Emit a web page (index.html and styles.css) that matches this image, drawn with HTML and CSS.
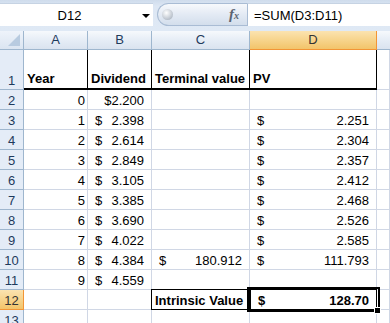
FILE: index.html
```html
<!DOCTYPE html>
<html>
    <head>
        <meta charset="utf-8" />
        <title>Intrinsic Value</title>
        <link rel="stylesheet" href="styles.css">
    </head>
    <body>
        <div class="formula-bar">
            <div class="name-box">
                <span class="name">D12</span>
                <span class="arrow"></span>
            </div>
            <div class="fx-pill">
                <span class="grip"></span>
                <span class="fx"><i>f</i><sub>x</sub></span>
            </div>
            <div class="formula">=SUM(D3:D11)</div>
        </div>

        <div class="sheet">
            <div class="corner"><span class="tri"></span></div>
            <div class="colhead">A</div>
            <div class="colhead">B</div>
            <div class="colhead">C</div>
            <div class="colhead active">D</div>
            <div class="colhead last"></div>

            <div class="rowhead">1</div>
            <div class="cell bold title">Year</div>
            <div class="cell bold title">Dividend</div>
            <div class="cell bold title">Terminal value</div>
            <div class="cell bold title">PV</div>
            <div class="cell"></div>

            <div class="rowhead">2</div>
            <div class="cell num">0</div>
            <div class="cell cur">$2.200</div>
            <div class="cell"></div>
            <div class="cell"></div>
            <div class="cell"></div>

            <div class="rowhead">3</div>
            <div class="cell num">1</div>
            <div class="cell acc"><span>$</span><span>2.398</span></div>
            <div class="cell"></div>
            <div class="cell acc"><span>$</span><span>2.251</span></div>
            <div class="cell"></div>

            <div class="rowhead">4</div>
            <div class="cell num">2</div>
            <div class="cell acc"><span>$</span><span>2.614</span></div>
            <div class="cell"></div>
            <div class="cell acc"><span>$</span><span>2.304</span></div>
            <div class="cell"></div>

            <div class="rowhead">5</div>
            <div class="cell num">3</div>
            <div class="cell acc"><span>$</span><span>2.849</span></div>
            <div class="cell"></div>
            <div class="cell acc"><span>$</span><span>2.357</span></div>
            <div class="cell"></div>

            <div class="rowhead">6</div>
            <div class="cell num">4</div>
            <div class="cell acc"><span>$</span><span>3.105</span></div>
            <div class="cell"></div>
            <div class="cell acc"><span>$</span><span>2.412</span></div>
            <div class="cell"></div>

            <div class="rowhead">7</div>
            <div class="cell num">5</div>
            <div class="cell acc"><span>$</span><span>3.385</span></div>
            <div class="cell"></div>
            <div class="cell acc"><span>$</span><span>2.468</span></div>
            <div class="cell"></div>

            <div class="rowhead">8</div>
            <div class="cell num">6</div>
            <div class="cell acc"><span>$</span><span>3.690</span></div>
            <div class="cell"></div>
            <div class="cell acc"><span>$</span><span>2.526</span></div>
            <div class="cell"></div>

            <div class="rowhead">9</div>
            <div class="cell num">7</div>
            <div class="cell acc"><span>$</span><span>4.022</span></div>
            <div class="cell"></div>
            <div class="cell acc"><span>$</span><span>2.585</span></div>
            <div class="cell"></div>

            <div class="rowhead">10</div>
            <div class="cell num">8</div>
            <div class="cell acc"><span>$</span><span>4.384</span></div>
            <div class="cell acc"><span>$</span><span>180.912</span></div>
            <div class="cell acc"><span>$</span><span>111.793</span></div>
            <div class="cell"></div>

            <div class="rowhead">11</div>
            <div class="cell num">9</div>
            <div class="cell acc"><span>$</span><span>4.559</span></div>
            <div class="cell"></div>
            <div class="cell"></div>
            <div class="cell"></div>

            <div class="rowhead active">12</div>
            <div class="cell"></div>
            <div class="cell"></div>
            <div class="cell bold boxed">Intrinsic Value</div>
            <div class="cell bold acc boxed selected"><span>$</span><span>128.70</span><i class="handle"></i></div>
            <div class="cell"></div>

            <div class="rowhead">13</div>
            <div class="cell"></div>
            <div class="cell"></div>
            <div class="cell"></div>
            <div class="cell"></div>
            <div class="cell"></div>
        </div>
    </body>
</html>
```

FILE: styles.css
```css
html {
    margin: 0px;
    padding: 0px;
}
body {
    margin: 0px;
    padding: 0px;
    font-family: 'Liberation Sans', 'Arial', sans-serif;
    font-size: 13px;
    color: #000;
    background-color: #fff;
    overflow: hidden;
}

/* formula bar */
.formula-bar {
    display: flex;
    height: 31px;
    box-sizing: border-box;
    padding-top: 3px;
    padding-bottom: 5px;
    background: linear-gradient(#cfdcec, #dde7f4 20%, #dfe9f5);
}
.name-box {
    position: relative;
    width: 153px;
    background-color: #fff;
    border-top: 1px solid #c6d3e3;
    display: flex;
    align-items: center;
    justify-content: center;
    padding-right: 14px;
    box-sizing: border-box;
}
.arrow {
    position: absolute;
    right: 3px;
    top: 10px;
    border-left: 4px solid transparent;
    border-right: 4px solid transparent;
    border-top: 4px solid #000;
}
.fx-pill {
    position: relative;
    width: 90px;
    margin-left: 4px;
    border: 1px solid #a9bcd4;
    border-right: none;
    border-radius: 12px 0 0 12px;
    background: linear-gradient(#f7f9fc, #e3eaf4 50%, #d3deec);
    box-sizing: border-box;
}
.grip {
    position: absolute;
    left: 4px;
    top: 5px;
    width: 11px;
    height: 11px;
    border-radius: 50%;
    background: radial-gradient(circle at 40% 35%, #ffffff, #c3cad3 60%, #9aa4b0);
}
.fx {
    position: absolute;
    right: 8px;
    top: 2px;
    font-family: 'Liberation Serif', serif;
    font-size: 15px;
    color: #5b6470;
    font-weight: bold;
}
.fx sub {
    font-size: 10px;
    font-style: italic;
    vertical-align: 0;
}
.formula {
    flex: 1;
    background-color: #fff;
    border-left: 1px solid #a9bcd4;
    border-top: 1px solid #c6d3e3;
    padding-left: 6px;
    display: flex;
    align-items: center;
}

/* grid */
.sheet {
    display: grid;
    grid-template-columns: 24px 64px 64px 98px 127px 1fr;
    grid-template-rows: 19px 40px repeat(12, 20px);
}
.corner {
    position: relative;
    background: linear-gradient(#eef3fa, #dbe5f1);
    border-right: 1px solid #9eb6ce;
    border-bottom: 1px solid #9eb6ce;
}
.tri {
    position: absolute;
    right: 3px;
    bottom: 3px;
    border-left: 12px solid transparent;
    border-bottom: 12px solid #b8cbe0;
}
.colhead {
    display: flex;
    align-items: center;
    justify-content: center;
    color: #1e3a5c;
    line-height: 14px;
    background: linear-gradient(#f6f9fc, #e6edf6 50%, #dae3ef);
    border-right: 1px solid #9eb6ce;
    border-bottom: 1px solid #9eb6ce;
}
.colhead.active {
    background: linear-gradient(#fbe3b0, #f7d48c 50%, #f2c46a);
    border-right: 1px solid #f29536;
    border-bottom: 1px solid #f29536;
    color: #333;
}
.colhead.last {
    border-right: none;
}
.rowhead {
    display: flex;
    align-items: flex-end;
    justify-content: center;
    line-height: 14px;
    padding-bottom: 1px;
    box-sizing: border-box;
    color: #1e3a5c;
    background-color: #e4ecf7;
    border-right: 1px solid #9eb6ce;
    border-bottom: 1px solid #9eb6ce;
}
.rowhead.active {
    background: linear-gradient(#fbe3b0, #f2c46a);
    border-right: 1px solid #f29536;
    border-bottom: 1px solid #f29536;
    color: #333;
}
.cell {
    display: flex;
    align-items: flex-end;
    line-height: 14px;
    padding: 0 3px 1px 3px;
    box-sizing: border-box;
    white-space: nowrap;
    border-right: 1px solid #d0d7e5;
    border-bottom: 1px solid #d0d7e5;
}
.bold {
    font-weight: bold;
}
.cell.title {
    border-right: 1px solid #000;
    border-bottom: 2px solid #000;
    padding-bottom: 2px;
}
.cell.num {
    justify-content: flex-end;
    padding-right: 2px;
}
.cell.cur {
    justify-content: flex-end;
    padding-right: 7px;
}
.cell.acc {
    justify-content: space-between;
    padding-left: 7px;
    padding-right: 7px;
}
.cell.boxed {
    border: 1px solid #000;
    margin-left: -1px;
    margin-top: -1px;
    padding-left: 3px;
}
.cell.acc.boxed {
    padding-left: 7px;
}
.cell.selected {
    position: relative;
    margin-left: 0;
}
.cell.selected::after {
    content: '';
    position: absolute;
    left: -4px;
    top: -3px;
    right: -4px;
    bottom: -3px;
    border: 2px solid #000;
}
.handle {
    position: absolute;
    right: -5px;
    bottom: -5px;
    width: 5px;
    height: 5px;
    background-color: #000;
    border: 1px solid #fff;
    z-index: 1;
}
```
